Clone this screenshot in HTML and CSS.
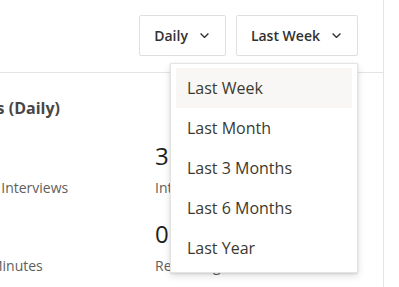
FILE: index.html
```html
<!DOCTYPE html>
<html lang="en">
<head>
<meta charset="UTF-8" />
<meta name="viewport" content="width=device-width, initial-scale=1" />
<title>Interview Stats</title>
<link rel="stylesheet" href="styles.css">
</head>
<body>
<div class="panel">
  <header class="toolbar">
    <button class="select">
      <span>Daily</span>
      <svg class="chev" width="9" height="5" viewBox="0 0 9 5"><polyline points="0.6,0.6 4.5,4.4 8.4,0.6" /></svg>
    </button>
    <div class="select-wrap">
      <button class="select">
        <span>Last Week</span>
        <svg class="chev" width="9" height="5" viewBox="0 0 9 5"><polyline points="0.6,0.6 4.5,4.4 8.4,0.6" /></svg>
      </button>
      <!-- period menu -->
      <ul class="menu">
        <li class="active">Last Week</li>
        <li>Last Month</li>
        <li>Last 3 Months</li>
        <li>Last 6 Months</li>
        <li>Last Year</li>
      </ul>
    </div>
  </header>

  <section class="stats">
    <h2>Interviews (Daily)</h2>
    <div class="grid">
      <div class="stat">
        <div class="value">12</div>
        <div class="label">Completed Interviews</div>
      </div>
      <div class="stat">
        <div class="value">31</div>
        <div class="label">Interviews Scheduled</div>
      </div>
      <div class="stat">
        <div class="value">4</div>
        <div class="label">Interview Minutes</div>
      </div>
      <div class="stat">
        <div class="value">0.5</div>
        <div class="label">Recording Minutes</div>
      </div>
    </div>
  </section>
</div>
</body>
</html>
```

FILE: styles.css
```css
body {
  margin: 0;
  font-family: "Open Sans", "Noto Sans", sans-serif;
  background: #fff;
  color: #323130;
}
.panel {
  width: 383px;
  min-height: 287px;
  border-right: 1px solid #e6e4e2;
  overflow: hidden;
}

/* top bar */
.toolbar {
  height: 57px;
  padding-top: 15px;
  padding-right: 25px;
  border-bottom: 1px solid #e6e4e2;
  display: flex;
  justify-content: flex-end;
  align-items: flex-start;
  gap: 10px;
}
.select {
  height: 41px;
  display: flex;
  align-items: center;
  gap: 12px;
  padding: 0 16px 0 14px;
  background: #fff;
  border: 1px solid #e1dfdd;
  border-radius: 2px;
  font-family: inherit;
  font-size: 14px;
  font-weight: 600;
  color: #323130;
}
.chev polyline {
  fill: none;
  stroke: #323130;
  stroke-width: 1.4;
}
.select-wrap {
  position: relative;
}

/* dropdown */
.menu {
  position: absolute;
  top: 48px;
  right: 0;
  width: 176px;
  margin: 0;
  padding: 4px 5px;
  list-style: none;
  background: #fff;
  border: 1px solid #e6e4e2;
  box-shadow: 0 3px 7px rgba(0,0,0,0.13), 0 1px 2px rgba(0,0,0,0.1);
  z-index: 10;
}
.menu li {
  height: 40px;
  line-height: 40px;
  padding-left: 11px;
  font-size: 16px;
  color: #3b3a30;
}
.menu li.active {
  background: #f8f7f5;
}

/* stats */
.stats {
  margin-left: -74px;
  padding-top: 24px;
}
.stats h2 {
  margin: 0 0 0 -6px;
  font-size: 16px;
  line-height: 22px;
  font-weight: 700;
  color: #484644;
}
.grid {
  display: grid;
  grid-template-columns: 229px 229px;
  row-gap: 20px;
  margin-top: 21px;
}
.value {
  font-size: 24px;
  line-height: 32px;
  color: #201f1e;
}
.label {
  margin-top: 6px;
  font-size: 14px;
  line-height: 20px;
  color: #605e5c;
}
```
